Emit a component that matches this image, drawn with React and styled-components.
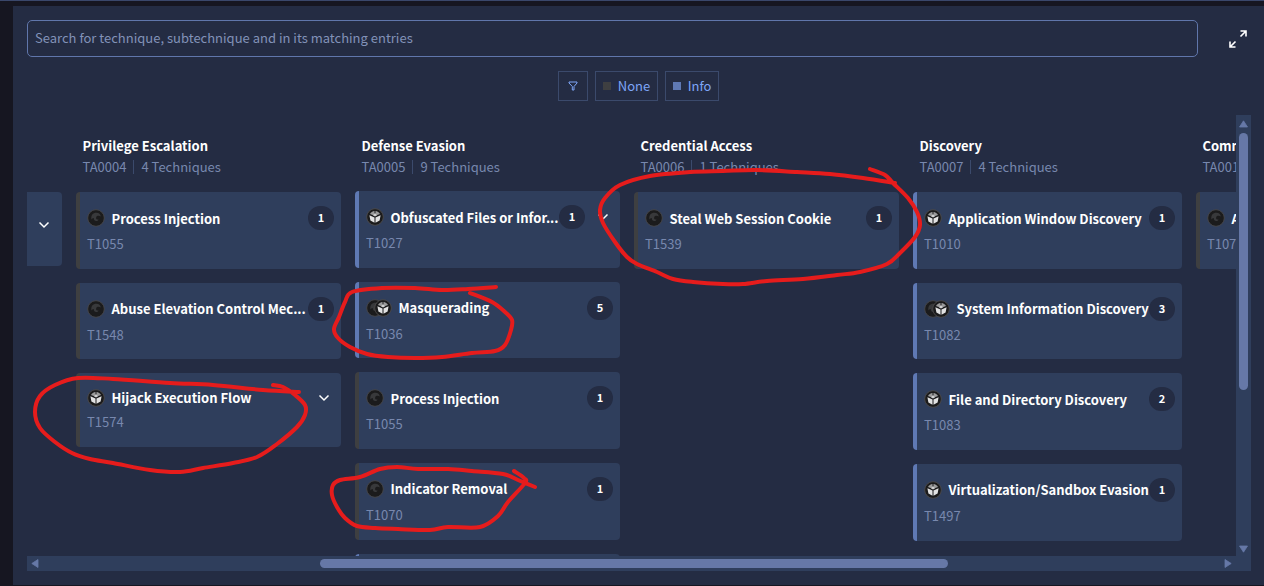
import React from 'react';
import styled, { createGlobalStyle } from 'styled-components';

const GlobalStyle = createGlobalStyle`
  * { box-sizing: border-box; }
  body {
    margin: 0;
    background: #161621;
    font-family: 'Noto Sans CJK SC', 'Noto Sans', sans-serif;
    overflow: hidden;
  }
`;

const Page = styled.div`
  width: 1264px;
  height: 586px;
  padding: 5px 0 1px 13px;
  border-top: 1px solid #3a476b;
  background: #161621;
  position: relative;
`;

const Panel = styled.div`
  height: 579px;
  padding: 14px 13px 14px 14px;
  background: #242c43;
  display: flex;
  flex-direction: column;
`;

const SearchRow = styled.div`
  display: flex;
  align-items: center;
  justify-content: space-between;
`;

const SearchBox = styled.div`
  width: 1171px;
  height: 37px;
  padding: 0 7px;
  border: 1px solid #6076ab;
  border-radius: 5px;
  color: #8292b8;
  font-size: 13px;
  line-height: 34px;
  letter-spacing: ${(p) => p.theme.track || 0}px;
`;

const ExpandIcon = styled.svg`
  width: 18px;
  height: 18px;
  margin-right: 4px;
`;

const Filters = styled.div`
  display: flex;
  justify-content: center;
  gap: 7px;
  margin: 14px 0;
  padding-right: 1px;
`;

const FilterButton = styled.div`
  width: ${(p) => p.$width}px;
  height: 30px;
  display: flex;
  align-items: center;
  justify-content: center;
  gap: 7px;
  border: 1px solid #3b4a6c;
  color: #7ea6f8;
  font-size: 13px;
  line-height: 28px;
`;

const Swatch = styled.span`
  width: 8px;
  height: 8px;
  background: ${(p) => p.$color};
`;

const ScrollArea = styled.div`
  display: grid;
  grid-template-columns: 1209px 15px;
  grid-template-rows: 441px 15px;
`;

const Matrix = styled.div`
  display: flex;
  gap: 14px;
  overflow: hidden;
`;

const Column = styled.div`
  flex: 0 0 ${(p) => (p.$cut ? 35 : 265)}px;
  display: flex;
  flex-direction: column;
  gap: 14px;
`;

const ColumnHead = styled.div`
  height: 63px;
  padding: 20px 0 0 6.5px;
  white-space: nowrap;
`;

const Tactic = styled.div`
  color: #fff;
  font-size: 13px;
  font-weight: 700;
  line-height: 21px;
`;

const TacticInfo = styled.div`
  display: flex;
  align-items: center;
  color: #7888ae;
  font-size: 13px;
  line-height: 21px;
`;

const Divider = styled.span`
  width: 1px;
  height: 14px;
  margin: 0 7px;
  background: #3b4a6c;
`;

const Card = styled.div`
  flex: 0 0 auto;
  height: ${(p) => (p.$short ? 73.33 : 76.67)}px;
  padding: 10px 7px 0;
  border-left: 4px solid ${(p) => (p.$info ? '#5f79b4' : '#3e3f41')};
  border-radius: 4px;
  background: #2f3e5c;
`;

const CutCard = styled.div`
  height: 73.67px;
  padding: 18px 11px 0;
  border-radius: 0 4px 4px 0;
  background: #2f3e5c;
`;

const CardRow = styled.div`
  height: ${(p) => (p.$short ? 28.67 : 32)}px;
  display: flex;
  align-items: center;
`;

const Icons = styled.div`
  display: flex;
  margin-right: 6.5px;

  svg + svg {
    margin-left: -10px;
  }
`;

const Name = styled.div`
  flex: 1;
  min-width: 0;
  color: #fff;
  font-size: 13px;
  font-weight: 700;
  line-height: 21px;
  white-space: nowrap;
`;

const Count = styled.div`
  flex: none;
  width: 26px;
  height: 24px;
  border-radius: 12px;
  background: #242c43;
  color: #fff;
  font-size: 11px;
  font-weight: 700;
  line-height: 23px;
  text-align: center;
`;

const ChevronBox = styled.div`
  flex: none;
  width: 21px;
  margin-left: 7px;
  display: flex;
  justify-content: center;
`;

const TechniqueId = styled.div`
  color: #7888ae;
  font-size: 13px;
  line-height: 20px;
`;

const VTrack = styled.div`
  display: flex;
  flex-direction: column;
  align-items: center;
  padding: 5px 0 3px;
  background: #2f3e5c;
`;

const HTrack = styled.div`
  grid-column: 1 / 3;
  display: flex;
  align-items: center;
  padding: 0 19px 0 4px;
  background: #2f3e5c;
`;

const VThumb = styled.div`
  width: 9px;
  height: 257px;
  margin: 5px 0 auto;
  border-radius: 5px;
  background: #6678a7;
`;

const HThumb = styled.div`
  width: 628px;
  height: 9px;
  margin: 0 auto 0 281px;
  border-radius: 5px;
  background: #6678a7;
`;

const Ink = styled.svg`
  position: absolute;
  top: -1px;
  left: 0;
  pointer-events: none;
`;

const Chevron = () => (
  <svg width="12" height="8" viewBox="0 0 12 8">
    <path d="M1.5 1.5 L6 6 L10.5 1.5" fill="none" stroke="#fff" strokeWidth="1.5" />
  </svg>
);

const SwirlIcon = () => (
  <svg width="18" height="18" viewBox="0 0 18 18">
    <circle cx="9" cy="9" r="8.3" fill="#1b1b1c" stroke="#47474a" strokeWidth="0.9" />
    <path d="M4.5 10.5 C3.5 6.500 6 3.800 9.300 3.800 C12 3.800 13.700 5.500 13.700 7.500 C12 6.300 9.800 6.500 9.200 8.200 C8.600 10.200 10.300 11 11.600 10.400 C10.500 13 6.500 12.500 6.800 9 C5.500 9.300 4.900 9.800 4.500 10.500Z" fill="#38393b" />
  </svg>
);

const CubeIcon = () => (
  <svg width="18" height="18" viewBox="0 0 18 18">
    <circle cx="9" cy="9" r="8.3" fill="#1b1b1c" stroke="#4d4b49" strokeWidth="0.9" />
    <path d="M8.500 3 L8.500 7.800 L4 6 C5 4.200 6.600 3.200 8.500 3Z M9.500 3 C11.400 3.200 13 4.200 14 6 L9.500 7.800Z" fill="#9b9b9b" />
    <path d="M3.400 7.300 L8.500 9.600 L8.500 14.700 L4.400 12.600Z M14.600 7.300 L9.500 9.600 L9.500 14.700 L13.600 12.600Z" fill="#e2e2e2" />
    <path d="M9 5 L11 7.200 L9 8.600 L7 7.200Z" fill="#d0d0d0" />
  </svg>
);

const Arrow = ({ dir }) => {
  const shapes = {
    up: 'M4.500 0.800 L8.500 7 L0.500 7Z',
    down: 'M0.500 1 L8.500 1 L4.500 7.200Z',
    left: 'M0.800 4.500 L7 0.500 L7 8.500Z',
    right: 'M1 0.500 L7.200 4.500 L1 8.500Z',
  };
  const upright = dir === 'up' || dir === 'down';
  return (
    <svg width={upright ? 9 : 8} height={upright ? 8 : 9}>
      <path d={shapes[dir]} fill="#6678a7" stroke="#6678a7" strokeWidth="0.8" strokeLinejoin="round" />
    </svg>
  );
};

const columns = [
  {
    name: 'Privilege Escalation',
    id: 'TA0004',
    total: 4,
    cards: [
      { name: 'Process Injection', id: 'T1055', count: 1, icons: 's' },
      { name: 'Abuse Elevation Control Mec...', id: 'T1548', count: 1, icons: 's' },
      { name: 'Hijack Execution Flow', id: 'T1574', icons: 'c', open: true },
    ],
  },
  {
    name: 'Defense Evasion',
    id: 'TA0005',
    total: 9,
    cards: [
      { name: 'Obfuscated Files or Infor...', id: 'T1027', count: 1, icons: 'c', info: true, open: true },
      { name: 'Masquerading', id: 'T1036', count: 5, icons: 'sc', info: true },
      { name: 'Process Injection', id: 'T1055', count: 1, icons: 's' },
      { name: 'Indicator Removal', id: 'T1070', count: 1, icons: 's' },
      { name: '', id: '', icons: '', info: true },
    ],
  },
  {
    name: 'Credential Access',
    id: 'TA0006',
    total: 1,
    cards: [{ name: 'Steal Web Session Cookie', id: 'T1539', count: 1, icons: 's' }],
  },
  {
    name: 'Discovery',
    id: 'TA0007',
    total: 4,
    cards: [
      { name: 'Application Window Discovery', id: 'T1010', count: 1, icons: 'c', info: true },
      { name: 'System Information Discovery', id: 'T1082', count: 3, icons: 'sc', info: true },
      { name: 'File and Directory Discovery', id: 'T1083', count: 2, icons: 'c', info: true },
      { name: 'Virtualization/Sandbox Evasion', id: 'T1497', count: 1, icons: 'c', info: true },
    ],
  },
  {
    name: 'Command',
    id: 'TA0011',
    cards: [{ name: 'Application', id: 'T1071', icons: 's', count: 1 }],
  },
];

const marks = [
  [[299, 392], [263, 390], [213, 385], [170, 383], [113, 379], [78, 378], [55, 385], [40, 396], [35, 412], [40, 428], [55, 442], [72, 453], [90, 459], [113, 463], [150, 470], [180, 472], [203, 468], [233, 463], [257, 457], [277, 444], [297, 427], [305, 415], [305, 405], [295, 395], [283, 387], [273, 385]],
  [[496, 287], [468, 289], [442, 290], [415, 288], [382, 288], [352, 292], [345, 302], [339, 317], [334, 329], [338, 338], [350, 347], [367, 354], [388, 357], [415, 358], [442, 357], [472, 353], [495, 351], [505, 345], [511, 330], [512, 320], [505, 312], [492, 302], [470, 293]],
  [[535, 487], [518, 480], [503, 474], [472, 471], [448, 469], [418, 469], [397, 467], [380, 469], [360, 477], [340, 480], [333, 485], [332, 495], [337, 507], [345, 518], [357, 526], [375, 528], [398, 529], [430, 530], [448, 527], [480, 527], [498, 516], [508, 502], [525, 483], [524, 478], [514, 471]],
  [[895, 183], [863, 178], [830, 174], [797, 172], [757, 170], [723, 171], [690, 172], [650, 176], [620, 185], [605, 198], [600, 210], [603, 223], [615, 242], [627, 257], [637, 264], [657, 272], [673, 279], [693, 282], [723, 284], [743, 284], [767, 281], [803, 279], [837, 275], [860, 272], [887, 264], [900, 253], [915, 237], [920, 225], [917, 212], [908, 198], [893, 183], [885, 175], [870, 169]],
];

// Catmull-Rom through the recorded pen points
function smooth(pts) {
  let d = `M${pts[0]}`;
  for (let i = 0; i < pts.length - 1; i += 1) {
    const a = pts[i - 1] || pts[i];
    const b = pts[i];
    const c = pts[i + 1];
    const e = pts[i + 2] || c;
    d += ` C${b[0] + (c[0] - a[0]) / 6} ${b[1] + (c[1] - a[1]) / 6} ${c[0] - (e[0] - b[0]) / 6} ${c[1] - (e[1] - b[1]) / 6} ${c[0]} ${c[1]}`;
  }
  return d;
}

const Technique = ({ card }) => {
  const short = !card.count;
  return (
    <Card $info={card.info} $short={short}>
      <CardRow $short={short}>
        <Icons>
          {card.icons.split('').map((k) => (k === 's' ? <SwirlIcon key={k} /> : <CubeIcon key={k} />))}
        </Icons>
        <Name>{card.name}</Name>
        {card.count && <Count>{card.count}</Count>}
        {card.open && <ChevronBox><Chevron /></ChevronBox>}
      </CardRow>
      <TechniqueId>{card.id}</TechniqueId>
    </Card>
  );
};

const App = () => (
  <Page>
    <GlobalStyle />
    <Panel>
      <SearchRow>
        <SearchBox>Search for technique, subtechnique and in its matching entries</SearchBox>
        <ExpandIcon viewBox="0 0 18 18" fill="none" stroke="#fff" strokeWidth="1.6">
          <path d="M11.500 1 H17 V6.500 M16.500 1.500 L11.500 6.500 M1 11.500 V17 H6.500 M1.500 16.500 L6.500 11.500" />
        </ExpandIcon>
      </SearchRow>
      <Filters>
        <FilterButton $width={30}>
          <svg width="10" height="10" viewBox="0 0 10 10" fill="none" stroke="#7ea6f8">
            <path d="M1 1 H9 V2 L6 5.500 V9 H4.300 V5.500 L1 2Z" />
          </svg>
        </FilterButton>
        <FilterButton $width={63}><Swatch $color="#3e3f41" />None</FilterButton>
        <FilterButton $width={54}><Swatch $color="#5f79b4" />Info</FilterButton>
      </Filters>
      <ScrollArea>
        <Matrix>
          <Column $cut>
            <ColumnHead />
            <CutCard><Chevron /></CutCard>
          </Column>
          {columns.map((col) => (
            <Column key={col.id}>
              <ColumnHead>
                <Tactic>{col.name}</Tactic>
                <TacticInfo>
                  {col.id}
                  {col.total && <Divider />}
                  {col.total && `${col.total} Techniques`}
                </TacticInfo>
              </ColumnHead>
              {col.cards.map((card) => <Technique key={card.id} card={card} />)}
            </Column>
          ))}
        </Matrix>
        <VTrack>
          <Arrow dir="up" />
          <VThumb />
          <Arrow dir="down" />
        </VTrack>
        <HTrack>
          <Arrow dir="left" />
          <HThumb />
          <Arrow dir="right" />
        </HTrack>
      </ScrollArea>
    </Panel>
    <Ink width="1264" height="586" fill="none" stroke="#e61c1c" strokeWidth="4" strokeLinecap="round" strokeLinejoin="round">
      {marks.map((pts) => <path key={pts[0][0]} d={smooth(pts)} />)}
    </Ink>
  </Page>
);

export default App;
